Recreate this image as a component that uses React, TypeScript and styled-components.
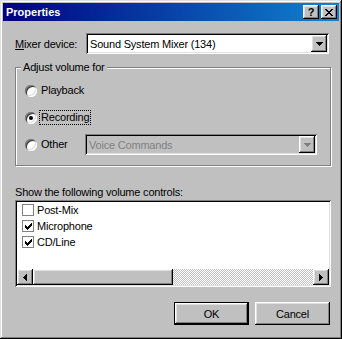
import styled, { createGlobalStyle } from 'styled-components';

const GlobalStyle = createGlobalStyle`
  html, body {
    margin: 0;
    padding: 0;
    background: #c0c0c0;
  }
  body {
    font-family: "Liberation Sans", Arial, sans-serif;
    font-size: 11px;
    letter-spacing: -0.2px;
    color: #000;
  }
`;

const raised = `
  box-shadow: inset -1px -1px #000, inset 1px 1px #fff,
    inset -2px -2px #808080, inset 2px 2px #dfdfdf;
`;

const sunken = `
  box-shadow: inset 1px 1px #808080, inset -1px -1px #fff,
    inset 2px 2px #000, inset -2px -2px #dfdfdf;
`;

const Window = styled.div`
  width: 342px;
  height: 339px;
  box-sizing: border-box;
  padding: 3px;
  background: #c0c0c0;
  display: flex;
  flex-direction: column;
  box-shadow: inset -1px -1px #000, inset 1px 1px #dfdfdf,
    inset -2px -2px #808080, inset 2px 2px #fff;
`;

const TitleBar = styled.div`
  height: 18px;
  display: flex;
  align-items: center;
  padding: 0 2px 0 3px;
  background: linear-gradient(to right, #000080, #1084d0);
  color: #fff;
  font-weight: bold;
  letter-spacing: 0;
`;

const TitleText = styled.span`
  flex: 1;
`;

const TitleButtons = styled.div`
  display: flex;
  gap: 2px;
`;

const TitleButton = styled.div`
  width: 16px;
  height: 14px;
  background: #c0c0c0;
  color: #000;
  display: flex;
  align-items: center;
  justify-content: center;
  font-size: 11px;
  font-weight: bold;
  ${raised}
`;

const Body = styled.div`
  flex: 1;
  display: flex;
  flex-direction: column;
  padding: 12px 8px 11px 12px;
`;

const MixerRow = styled.div`
  display: flex;
  align-items: center;
  height: 21px;
`;

const FieldLabel = styled.span`
  width: 71px;
`;

const Key = styled.span`
  text-decoration: underline;
`;

const ComboBox = styled.div<{ width: number; disabled?: boolean }>`
  width: ${(p) => p.width}px;
  height: 21px;
  box-sizing: border-box;
  padding: 2px;
  display: flex;
  align-items: center;
  background: ${(p) => (p.disabled ? '#c0c0c0' : '#fff')};
  color: ${(p) => (p.disabled ? '#808080' : '#000')};
  ${sunken}
`;

const ComboText = styled.span`
  flex: 1;
  padding-left: 2px;
`;

const DropButton = styled.div`
  width: 16px;
  height: 17px;
  display: flex;
  align-items: center;
  justify-content: center;
  background: #c0c0c0;
  ${raised}
`;

const GroupBox = styled.div`
  position: relative;
  margin-top: 13px;
  border: 1px solid #808080;
  box-shadow: inset 1px 1px #fff, 1px 1px #fff;
  padding: 12px 11px 10px 9px;
  display: flex;
  flex-direction: column;
  gap: 6px;
`;

const GroupLegend = styled.span`
  position: absolute;
  top: -7px;
  left: 5px;
  padding: 0 2px;
  line-height: 13px;
  background: #c0c0c0;
`;

const RadioRow = styled.div`
  height: 21px;
  display: flex;
  align-items: center;
`;

const Radio = styled.span<{ checked?: boolean }>`
  width: 12px;
  height: 12px;
  flex: none;
  border-radius: 50%;
  background: #fff;
  display: flex;
  align-items: center;
  justify-content: center;
  box-shadow: inset 1px 1px #808080, inset -1px -1px #fff,
    inset 2px 2px #404040, inset -2px -2px #dfdfdf;
  &::after {
    content: '';
    width: 4px;
    height: 4px;
    border-radius: 50%;
    background: ${(p) => (p.checked ? '#000' : 'transparent')};
  }
`;

const RadioLabel = styled.span<{ focused?: boolean; width?: number }>`
  margin-left: 3px;
  padding: 0 1px;
  line-height: 13px;
  ${(p) => (p.width ? `width: ${p.width}px;` : '')}
  outline: ${(p) => (p.focused ? '1px dotted #000' : 'none')};
`;

const Caption = styled.div`
  margin-top: 20px;
  line-height: 13px;
`;

const ListBox = styled.div`
  margin-top: 1px;
  height: 87px;
  box-sizing: border-box;
  padding: 2px;
  background: #fff;
  display: flex;
  flex-direction: column;
  ${sunken}
`;

const ListItems = styled.div`
  flex: 1;
`;

const CheckRow = styled.div`
  height: 16px;
  display: flex;
  align-items: center;
  gap: 3px;
  padding-left: 5px;
`;

const CheckBox = styled.span`
  width: 12px;
  height: 12px;
  box-sizing: border-box;
  border: 1px solid #808080;
  background: #fff;
  display: flex;
  align-items: center;
  justify-content: center;
`;

const ScrollBar = styled.div`
  height: 16px;
  display: flex;
`;

const ScrollButton = styled.div`
  width: 16px;
  height: 16px;
  display: flex;
  align-items: center;
  justify-content: center;
  background: #c0c0c0;
  ${raised}
`;

const ScrollThumb = styled.div`
  width: 140px;
  background: #c0c0c0;
  ${raised}
`;

const ScrollTrack = styled.div`
  flex: 1;
  background: repeating-conic-gradient(#c0c0c0 0% 25%, #fff 0% 50%) 0 0 / 2px 2px;
`;

const ButtonRow = styled.div`
  margin-top: 15px;
  display: flex;
  justify-content: flex-end;
  gap: 6px;
  padding-right: 1px;
`;

const PushButton = styled.div<{ isDefault?: boolean }>`
  width: 75px;
  height: 23px;
  display: flex;
  align-items: center;
  justify-content: center;
  background: #c0c0c0;
  box-shadow: ${(p) =>
    p.isDefault
      ? 'inset 0 0 0 1px #000, inset -2px -2px #000, inset 2px 2px #fff, inset -3px -3px #808080, inset 3px 3px #dfdfdf'
      : 'inset -1px -1px #000, inset 1px 1px #fff, inset -2px -2px #808080, inset 2px 2px #dfdfdf'};
`;

const DOWN = 'M0 0h7v1H0z M1 1h5v1H1z M2 2h3v1H2z M3 3h1v1H3z';
const LEFT = 'M3 0h1v7H3z M2 1h1v5H2z M1 2h1v3H1z M0 3h1v1H0z';
const RIGHT = 'M0 0h1v7H0z M1 1h1v5H1z M2 2h1v3H2z M3 3h1v1H3z';
const CLOSE =
  'M0 0h2v1H0z M6 0h2v1H6z M1 1h2v1H1z M5 1h2v1H5z M2 2h4v1H2z M3 3h2v1H3z M2 4h4v1H2z M1 5h2v1H1z M5 5h2v1H5z M0 6h2v1H0z M6 6h2v1H6z';
const CHECK =
  'M6 0h1v1H6z M5 1h2v1H5z M0 2h1v1H0z M4 2h3v1H4z M0 3h2v1H0z M3 3h3v1H3z M0 4h5v1H0z M1 5h3v1H1z M2 6h1v1H2z';

function Glyph({ d, w, h, color = '#000' }: { d: string; w: number; h: number; color?: string }) {
  return (
    <svg width={w} height={h} viewBox={`0 0 ${w} ${h}`} shapeRendering="crispEdges">
      <path d={d} fill={color} />
    </svg>
  );
}

const items = [
  { name: 'Post-Mix', checked: false },
  { name: 'Microphone', checked: true },
  { name: 'CD/Line', checked: true },
];

export default function App() {
  return (
    <>
      <GlobalStyle />
      <Window>
        <TitleBar>
          <TitleText>Properties</TitleText>
          <TitleButtons>
            <TitleButton>?</TitleButton>
            <TitleButton>
              <Glyph d={CLOSE} w={8} h={7} />
            </TitleButton>
          </TitleButtons>
        </TitleBar>
        <Body>
          <MixerRow>
            <FieldLabel>
              <Key>M</Key>ixer device:
            </FieldLabel>
            <ComboBox width={243}>
              <ComboText>Sound System Mixer (134)</ComboText>
              <DropButton>
                <Glyph d={DOWN} w={7} h={4} />
              </DropButton>
            </ComboBox>
          </MixerRow>

          <GroupBox>
            <GroupLegend>Adjust volume for</GroupLegend>
            <RadioRow>
              <Radio />
              <RadioLabel>Playback</RadioLabel>
            </RadioRow>
            <RadioRow>
              <Radio checked />
              <RadioLabel focused>Recording</RadioLabel>
            </RadioRow>
            <RadioRow>
              <Radio />
              <RadioLabel width={43}>Other</RadioLabel>
              <ComboBox width={232} disabled>
                <ComboText>Voice Commands</ComboText>
                <DropButton>
                  <Glyph d={DOWN} w={7} h={4} color="#808080" />
                </DropButton>
              </ComboBox>
            </RadioRow>
          </GroupBox>

          <Caption>Show the following volume controls:</Caption>
          <ListBox>
            <ListItems>
              {items.map((item) => (
                <CheckRow key={item.name}>
                  <CheckBox>{item.checked && <Glyph d={CHECK} w={7} h={7} />}</CheckBox>
                  <span>{item.name}</span>
                </CheckRow>
              ))}
            </ListItems>
            <ScrollBar>
              <ScrollButton>
                <Glyph d={LEFT} w={4} h={7} />
              </ScrollButton>
              <ScrollThumb />
              <ScrollTrack />
              <ScrollButton>
                <Glyph d={RIGHT} w={4} h={7} />
              </ScrollButton>
            </ScrollBar>
          </ListBox>

          <ButtonRow>
            <PushButton isDefault>OK</PushButton>
            <PushButton>Cancel</PushButton>
          </ButtonRow>
        </Body>
      </Window>
    </>
  );
}
